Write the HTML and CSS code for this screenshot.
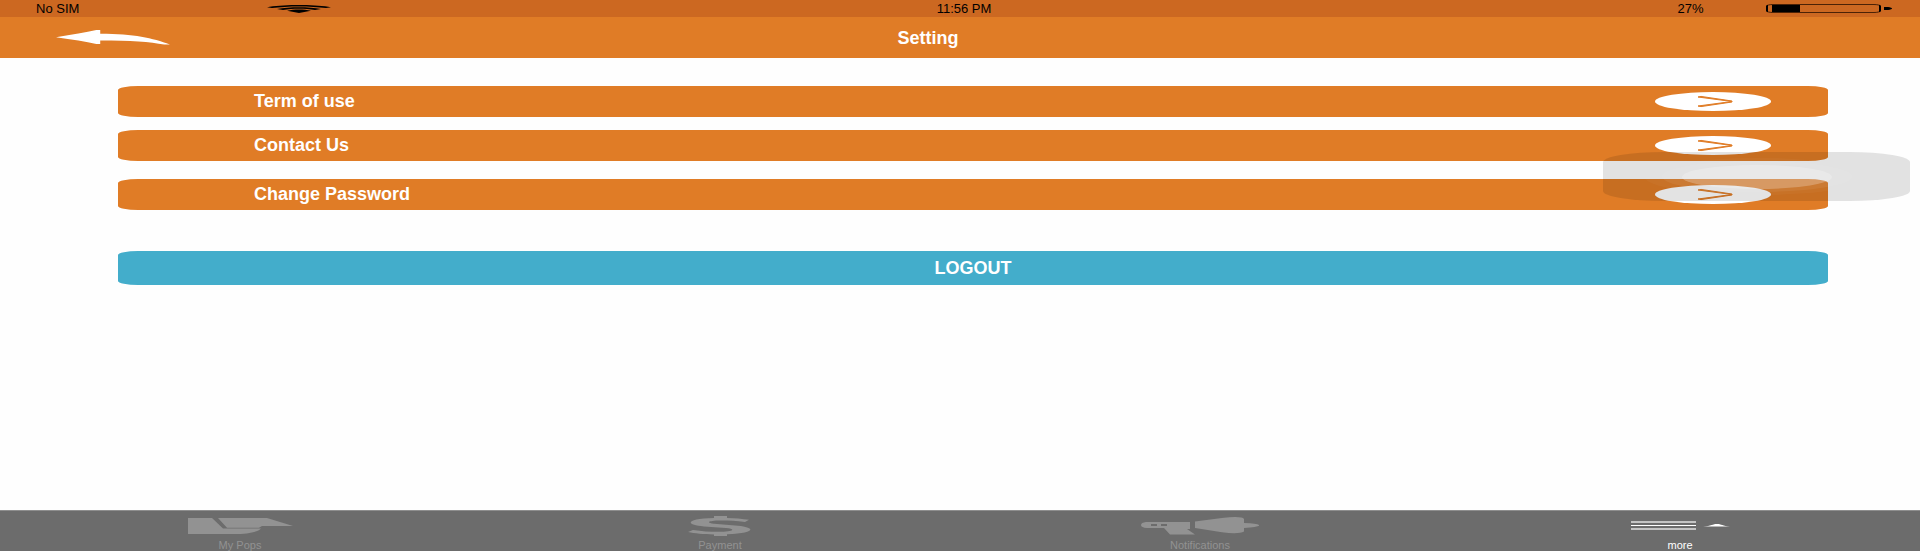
FILE: index.html
```html
<!DOCTYPE html>
<html lang="en">
<head>
<meta charset="utf-8">
<title>Setting</title>
<link rel="stylesheet" href="styles.css">
</head>
<body>
<div class="status">
  <div class="status-left">
    <span class="carrier">No SIM</span>
    <svg class="wifi" viewBox="0 0 64 8" preserveAspectRatio="none" aria-hidden="true">
      <path d="M0 2.3C16-.8 48-.8 64 2.3L59 3.1C44 1 20 1 5 3.1Z"/>
      <path d="M10 4C22 1.6 42 1.6 54 4L48 5C38 3.2 26 3.2 16 5Z"/>
      <path d="M20 5.8C27 4.2 37 4.2 44 5.8L32 8Z"/>
    </svg>
  </div>
  <span class="time">11:56 PM</span>
  <div class="status-right">
    <span class="percent">27%</span>
    <svg class="battery" viewBox="0 0 126 9" preserveAspectRatio="none" aria-hidden="true">
      <rect x="1" y=".5" width="113" height="8" rx="6" ry="1.5" fill="none" stroke="#2a1000" stroke-width=".8"/>
      <path d="M0 2.2Q0 1 2 .8V8.2Q0 8 0 6.8ZM113 .8Q115 1 115 2.2V6.8Q115 8 113 8.2Z"/>
      <rect x="6" y="1" width="28" height="7"/>
      <path d="M118 3H122Q126 3.6 126 4.5T122 6H118Z"/>
    </svg>
  </div>
</div>
<header class="header">
  <button class="back" type="button" aria-label="Back">
    <svg class="back-icon" viewBox="0 0 116 15" preserveAspectRatio="none" aria-hidden="true">
      <path d="M0 7.2Q25 3.5 41 0H45V3.8C80 4 98 8 116 14.6H110C96 11.6 76 10.4 45 10.4V14H41Q25 10.5 0 7.2Z"/>
    </svg>
  </button>
  <h1 class="title">Setting</h1>
</header>
<main class="content">
  <nav class="menu">
    <a class="item" href="#terms"><span>Term of use</span>
      <svg class="go" viewBox="0 0 116 19" preserveAspectRatio="none" aria-hidden="true"><ellipse class="disc" cx="58" cy="9.5" rx="58" ry="9.5"/><path class="chevron" d="M43 5L77 9.5L43 14L46 14.6L77 10V9L46 4.4Z"/></svg></a>
    <a class="item" href="#contact"><span>Contact Us</span>
      <svg class="go" viewBox="0 0 116 19" preserveAspectRatio="none" aria-hidden="true"><ellipse class="disc" cx="58" cy="9.5" rx="58" ry="9.5"/><path class="chevron" d="M43 5L77 9.5L43 14L46 14.6L77 10V9L46 4.4Z"/></svg></a>
    <a class="item item-password" href="#password"><span>Change Password</span>
      <svg class="go" viewBox="0 0 116 19" preserveAspectRatio="none" aria-hidden="true"><ellipse class="disc" cx="58" cy="9.5" rx="58" ry="9.5"/><path class="chevron" d="M43 5L77 9.5L43 14L46 14.6L77 10V9L46 4.4Z"/></svg></a>
  </nav>
  <button class="logout" type="button">LOGOUT</button>
</main>
<nav class="tabs">
  <a class="tab" href="#pops">
    <svg class="tab-icon pops" viewBox="0 0 105 16" preserveAspectRatio="none" aria-hidden="true"><path d="M0 0H24L35 10.5H73C70 14 60 16 46 16H0ZM30 0H79L105 8H74L71 9.7H39Z"/></svg>
    <span>My Pops</span></a>
  <a class="tab" href="#payment">
    <svg class="tab-icon payment" viewBox="0 0 64 20" preserveAspectRatio="none" aria-hidden="true"><path d="M26 0H39V1.9C47 2.1 54 2.7 61 3.8L57 6C47 4.8 38 4.4 30 4.6C20 5 18 6.7 26 7.7L50 9.7C68 11.4 68 17.2 39 18.3V20H26V18.4C15 18.2 7 17.5 0 16L5 14C15 15.5 25 16 33 15.8C46 15.5 48 13 38 12L16 10.4C-4 8.6-2 2.7 26 2Z"/></svg>
    <span>Payment</span></a>
  <a class="tab" href="#notifications">
    <svg class="tab-icon notifications" viewBox="0 0 118 18" preserveAspectRatio="none" aria-hidden="true"><path fill-rule="evenodd" d="M5 5H49V12H46L54 17.4H29L23 11H6Q0 10.5 0 8T5 5ZM10 7V9H16V7ZM20 7V9H26V7Z"/><path d="M54 4.6L81 1Q101-1.2 103 2V6Q116 6.5 118 8T103 11V14.5Q98 17.5 81 15.3L54 11Z"/></svg>
    <span>Notifications</span></a>
  <a class="tab tab-active" href="#more" aria-current="page">
    <svg class="tab-icon more" viewBox="0 0 99 10" preserveAspectRatio="none" aria-hidden="true"><path class="soft" d="M0 0H65V2H0ZM0 7H65V9H0Z"/><path d="M0 4H65V5H0ZM72 5.5C80 5 82 3 86 3S92 5 99 5.5Z"/></svg>
    <span>more</span></a>
</nav>
<div class="assist" aria-hidden="true"><span class="ring"><span class="ring-mid"><span class="ring-core"></span></span></span></div>
</body>
</html>
```
FILE: styles.css
```css
* { box-sizing: border-box; }

body {
  position: relative;
  display: flex;
  flex-direction: column;
  min-height: 100vh;
  margin: 0;
  background: #fefefe;
  font-family: "Liberation Sans", Arial, sans-serif;
  font-size: 18px;
  color: #fff;
}

a { color: inherit; text-decoration: none; }
button { margin: 0; border: 0; padding: 0; font: inherit; color: inherit; }
svg { display: block; flex: none; fill: currentColor; }

.status {
  display: grid;
  grid-template-columns: 1fr auto 1fr;
  align-items: center;
  height: 17px;
  padding: 0 28px 0 36px;
  background: #cc6821;
  color: #000;
  font-size: 13px;
  line-height: 16px;
}
.status-left, .status-right { display: flex; align-items: center; }
.status-right { justify-content: flex-end; gap: 18px; }
.carrier { width: 231px; }
.wifi { width: 64px; height: 8px; }
.percent { width: 115px; text-align: center; }
.battery { width: 126px; height: 9px; }

.header {
  display: flex;
  align-items: center;
  padding: 0 234px 0 56px;
  background: #e07c26;
}
.back { width: 114px; padding: 13px 0; background: none; }
.back-icon { width: 114px; height: 15px; }
.title { flex: 1; margin: 0; text-align: center; font-size: 18px; line-height: 24px; }

.content { flex: 1; padding: 28px 92px 28px 118px; }
.menu { display: grid; gap: 13px; }
.item {
  display: flex;
  align-items: center;
  justify-content: space-between;
  padding: 0 57px 0 136px;
  border-radius: 20px / 4px;
  background: #e07c26;
  line-height: 31px;
  font-weight: bold;
}
.item-password { margin-top: 5px; }
.go { width: 116px; height: 19px; }
.disc { fill: #fff; }
.chevron { fill: #e07c26; stroke: #e07c26; stroke-width: 1; }
.logout {
  display: block;
  width: 100%;
  margin-top: 41px;
  border-radius: 20px / 4px;
  background: #43adcb;
  line-height: 34px;
  font-weight: bold;
}

.tabs {
  display: grid;
  grid-template-columns: repeat(4, 1fr);
  border-top: 1px solid #8e8e8e;
  background: #6c6c6c;
  color: #929292;
}
.tab {
  display: grid;
  grid-template-rows: 29px 11px;
  place-items: center;
  font-size: 11px;
  line-height: 11px;
}
.tab-active { color: #fff; }
.pops { width: 105px; height: 16px; }
.payment { width: 64px; height: 20px; }
.notifications { width: 118px; height: 18px; }
.more { width: 99px; height: 10px; }
.soft { opacity: .6; }

.assist {
  position: absolute;
  top: 152px;
  right: 10px;
  display: grid;
  place-items: center;
  width: 307px;
  height: 49px;
  border-radius: 60px / 10px;
  background: rgba(0, 0, 0, .11);
}
.ring, .ring-mid, .ring-core { display: grid; place-items: center; border-radius: 50%; }
.ring { width: 226px; height: 37px; background: rgba(255, 255, 255, .03); }
.ring-mid { width: 190px; height: 31px; background: rgba(255, 255, 255, .06); }
.ring-core { width: 150px; height: 24px; background: rgba(255, 255, 255, .24); }
```
